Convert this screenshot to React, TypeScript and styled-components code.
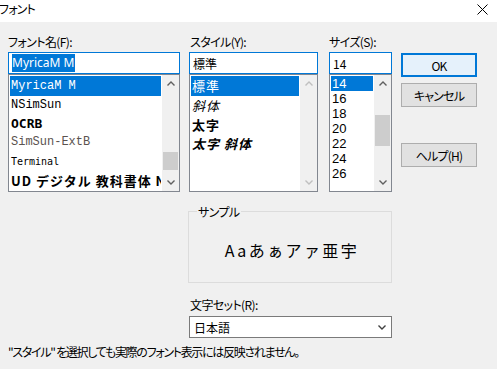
import React from 'react';
import styled, { createGlobalStyle } from 'styled-components';

const GlobalStyle = createGlobalStyle`
  html, body {
    margin: 0;
    padding: 0;
    background: #f0f0f0;
  }
  body {
    font-family: "Noto Sans CJK JP", "Noto Sans", sans-serif;
    font-size: 12px;
    color: #000;
  }
`;

const Window = styled.div`
  width: 497px;
  height: 369px;
  overflow: hidden;
  display: flex;
  flex-direction: column;
  background: #f0f0f0;
`;

const TitleBar = styled.div`
  height: 22px;
  background: #fff;
  display: flex;
  align-items: flex-start;
  justify-content: space-between;
  padding-right: 9px;
`;

const Title = styled.span`
  line-height: 16px;
  margin-top: 1px;
  margin-left: -1px;
  letter-spacing: -0.8px;
  font-feature-settings: "palt";
`;

const CloseIcon = styled.svg`
  margin-top: 4px;
`;

const Body = styled.div`
  display: grid;
  grid-template-columns: 181px 140px 72px 76px;
  grid-template-areas:
    "font style size buttons"
    ". sample sample ."
    ". charset charset ."
    "note note note note";
  padding: 12px 0 0 8px;
`;

const Column = styled.div<{ $area: string; $width: number }>`
  grid-area: ${(p) => p.$area};
  width: ${(p) => p.$width}px;
  display: flex;
  flex-direction: column;
`;

const Label = styled.div<{ $indent?: number }>`
  height: 16px;
  line-height: 16px;
  margin-bottom: 2px;
  padding-left: ${(p) => p.$indent ?? 0}px;
  letter-spacing: -0.6px;
  font-feature-settings: "palt";
  white-space: nowrap;
`;

const TextBox = styled.div`
  height: 22px;
  box-sizing: border-box;
  border: 1px solid #0078d7;
  background: #fff;
  display: flex;
  align-items: center;
  padding-left: 3px;
  font-feature-settings: "palt";
`;

const Selection = styled.span`
  background: #0078d7;
  color: #fff;
  line-height: 18px;
  padding-right: 1px;
  font-family: "Noto Sans", sans-serif;
`;

const ListBox = styled.div`
  height: 118px;
  box-sizing: border-box;
  border: 1px solid #828790;
  background: #fff;
  display: flex;
`;

const Items = styled.div`
  flex: 1;
  min-width: 0;
  padding: 1px 1px 0 1px;
  overflow: hidden;
`;

const Item = styled.div<{ $h: number; $selected?: boolean; $size?: number }>`
  height: ${(p) => p.$h}px;
  line-height: ${(p) => p.$h}px;
  display: flex;
  align-items: center;
  padding-left: 1px;
  white-space: nowrap;
  overflow: hidden;
  font-size: ${(p) => p.$size ?? 12}px;
  background: ${(p) => (p.$selected ? '#0078d7' : 'transparent')};
  color: ${(p) => (p.$selected ? '#fff' : '#000')};
`;

const FontName = styled.span<{
  $family: string;
  $weight?: number;
  $color?: string;
  $size?: number;
  $spacing?: number;
}>`
  font-family: ${(p) => p.$family};
  font-weight: ${(p) => p.$weight ?? 400};
  font-size: ${(p) => p.$size ?? 12}px;
  letter-spacing: ${(p) => p.$spacing ?? 0}px;
  color: ${(p) => p.$color ?? 'inherit'};
`;

const StyleName = styled.span<{ $italic?: boolean; $bold?: boolean }>`
  font-style: ${(p) => (p.$italic ? 'italic' : 'normal')};
  font-weight: ${(p) => (p.$bold ? 700 : 400)};
  letter-spacing: 1px;
`;

const ScrollBar = styled.div`
  width: 17px;
  flex: none;
  background: #f0f0f0;
  display: flex;
  flex-direction: column;
`;

const ArrowButton = styled.div`
  height: 17px;
  display: flex;
  align-items: center;
  justify-content: center;
`;

const Track = styled.div`
  flex: 1;
  display: flex;
  flex-direction: column;
`;

const Thumb = styled.div<{ $top: number; $height: number }>`
  margin: ${(p) => p.$top}px 1px 0 1px;
  height: ${(p) => p.$height}px;
  background: #cdcdcd;
`;

const Buttons = styled.div`
  grid-area: buttons;
  display: flex;
  flex-direction: column;
  padding-top: 19px;
`;

const Button = styled.div<{ $default?: boolean; $gap?: number }>`
  width: 76px;
  height: 24px;
  box-sizing: border-box;
  margin-top: ${(p) => p.$gap ?? 0}px;
  display: flex;
  align-items: center;
  justify-content: center;
  letter-spacing: -0.8px;
  font-feature-settings: "palt";
  background: ${(p) => (p.$default ? '#e5f1fb' : '#e1e1e1')};
  border: ${(p) => (p.$default ? '2px solid #0078d7' : '1px solid #adadad')};
`;

const SampleGroup = styled.div`
  grid-area: sample;
  width: 204px;
  height: 72px;
  box-sizing: border-box;
  margin: 19px 0 0 -1px;
  border: 1px solid #dcdcdc;
  display: flex;
  flex-direction: column;
`;

const GroupLegend = styled.span`
  align-self: flex-start;
  margin: -8px 0 0 8px;
  padding: 0 1px;
  line-height: 16px;
  letter-spacing: -0.6px;
  background: #f0f0f0;
  font-feature-settings: "palt";
`;

const SampleText = styled.div`
  flex: 1;
  display: flex;
  align-items: center;
  justify-content: center;
  padding: 0 0 3px 4px;
  font-size: 16px;
  letter-spacing: 2.4px;
`;

const Charset = styled.div`
  grid-area: charset;
  width: 203px;
  margin-top: 14px;
  display: flex;
  flex-direction: column;
`;

const ComboBox = styled.div`
  height: 22px;
  box-sizing: border-box;
  margin-top: 1px;
  border: 1px solid #7a7a7a;
  background: #fff;
  display: flex;
  align-items: center;
  justify-content: space-between;
  padding: 0 5px 0 4px;
`;

const Note = styled.div`
  grid-area: note;
  margin-top: 6px;
  line-height: 16px;
  letter-spacing: -1.3px;
  font-feature-settings: "palt";
  white-space: nowrap;
`;

const Chevron: React.FC<{ up?: boolean; color: string }> = ({ up, color }) => (
  <svg width="8" height="5" viewBox="0 0 8 5">
    <polyline
      points={up ? '0.5,4.5 4,1 7.5,4.5' : '0.5,0.5 4,4 7.5,0.5'}
      fill="none"
      stroke={color}
      strokeWidth="1.4"
    />
  </svg>
);

interface BarProps {
  disabled?: boolean;
  thumb?: { top: number; height: number };
}

const VScroll: React.FC<BarProps> = ({ disabled, thumb }) => {
  const color = disabled ? '#bfbfbf' : '#606060';
  return (
    <ScrollBar>
      <ArrowButton><Chevron up color={color} /></ArrowButton>
      <Track>{thumb && <Thumb $top={thumb.top} $height={thumb.height} />}</Track>
      <ArrowButton><Chevron color={color} /></ArrowButton>
    </ScrollBar>
  );
};

const fonts = [
  { name: 'MyricaM M', family: '"Liberation Mono", monospace', h: 20 },
  { name: 'NSimSun', family: '"Liberation Mono", monospace', h: 19 },
  { name: 'OCRB', family: '"DejaVu Sans Mono", monospace', h: 18, weight: 700, size: 13 },
  { name: 'SimSun-ExtB', family: '"Liberation Mono", monospace', h: 19, color: '#5b5350' },
  { name: 'Terminal', family: '"DejaVu Sans Mono", monospace', h: 19, size: 10 },
  {
    name: 'UD デジタル 教科書体 N',
    family: '"Noto Sans CJK JP", sans-serif',
    h: 19,
    weight: 700,
    size: 13,
    spacing: 1,
  },
];

const styles = [
  { name: '標準', h: 20 },
  { name: '斜体', h: 19, italic: true },
  { name: '太字', h: 19, bold: true },
  { name: '太字 斜体', h: 19, bold: true, italic: true },
];

const sizes = ['14', '16', '18', '20', '22', '24', '26'];

export default function App() {
  return (
    <Window>
      <GlobalStyle />
      <TitleBar>
        <Title>フォント</Title>
        <CloseIcon width="11" height="11" viewBox="0 0 11 11">
          <path d="M0.5 0.5 L10.5 10.5 M10.5 0.5 L0.5 10.5" stroke="#000" strokeWidth="1" />
        </CloseIcon>
      </TitleBar>
      <Body>
        <Column $area="font" $width={172}>
          <Label>フォント名(F):</Label>
          <TextBox><Selection>MyricaM M</Selection></TextBox>
          <ListBox>
            <Items>
              {fonts.map((f, i) => (
                <Item key={f.name} $h={f.h} $selected={i === 0}>
                  <FontName
                    $family={f.family}
                    $weight={f.weight}
                    $color={i === 0 ? undefined : f.color}
                    $size={f.size}
                    $spacing={f.spacing}
                  >
                    {f.name}
                  </FontName>
                </Item>
              ))}
            </Items>
            <VScroll thumb={{ top: 60, height: 18 }} />
          </ListBox>
        </Column>

        <Column $area="style" $width={129}>
          <Label $indent={1}>スタイル(Y):</Label>
          <TextBox>標準</TextBox>
          <ListBox>
            <Items>
              {styles.map((s, i) => (
                <Item key={s.name} $h={s.h} $selected={i === 0} $size={13}>
                  <StyleName $italic={s.italic} $bold={s.bold}>{s.name}</StyleName>
                </Item>
              ))}
            </Items>
            <VScroll disabled />
          </ListBox>
        </Column>

        <Column $area="size" $width={63}>
          <Label>サイズ(S):</Label>
          <TextBox>14</TextBox>
          <ListBox>
            <Items>
              {sizes.map((s, i) => (
                <Item key={s} $h={15} $selected={i === 0}>
                  <FontName $family='"Liberation Sans", sans-serif' $size={13}>{s}</FontName>
                </Item>
              ))}
            </Items>
            <VScroll thumb={{ top: 23, height: 31 }} />
          </ListBox>
        </Column>

        <Buttons>
          <Button $default>OK</Button>
          <Button $gap={6}>キャンセル</Button>
          <Button $gap={36}>ヘルプ(H)</Button>
        </Buttons>

        <SampleGroup>
          <GroupLegend>サンプル</GroupLegend>
          <SampleText>Aaあぁアァ亜宇</SampleText>
        </SampleGroup>

        <Charset>
          <Label $indent={1}>文字セット(R):</Label>
          <ComboBox>
            <span>日本語</span>
            <Chevron color="#404040" />
          </ComboBox>
        </Charset>

        <Note>"スタイル" を選択しても実際のフォント表示には反映されません。</Note>
      </Body>
    </Window>
  );
}
